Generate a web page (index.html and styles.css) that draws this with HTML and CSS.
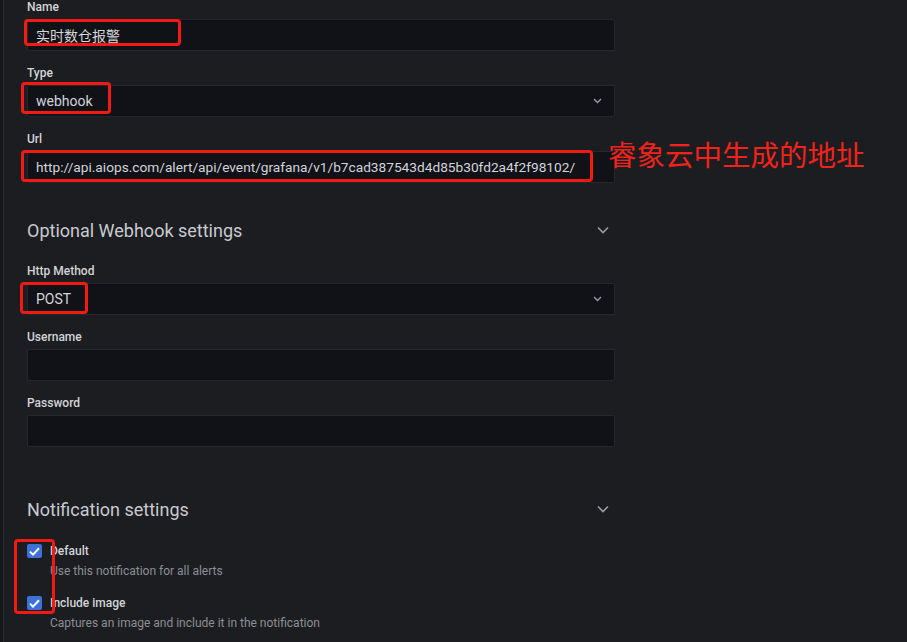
FILE: index.html
```html
<!DOCTYPE html>
<html lang="zh-CN">
<head>
    <meta charset="UTF-8">
    <meta name="viewport" content="width=device-width, initial-scale=1.0">
    <title>Notification channel</title>
    <link rel="stylesheet" href="styles.css">
</head>
<body>
    <div class="shell">
        <div class="rail"></div>
        <div class="main">
            <form class="form">
                <div class="field">
                    <label class="label">Name</label>
                    <input class="input" type="text" value="实时数仓报警">
                </div>
                <div class="field">
                    <label class="label">Type</label>
                    <div class="select">
                        <span>webhook</span>
                        <svg class="caret" width="9" height="6" viewBox="0 0 9 6"><path d="M1 1l3.5 3.5L8 1" fill="none" stroke="#9a9ca3" stroke-width="1.4"/></svg>
                    </div>
                </div>
                <div class="field">
                    <label class="label">Url</label>
                    <input class="input input-url" type="text" value="http://api.aiops.com/alert/api/event/grafana/v1/b7cad387543d4d85b30fd2a4f2f98102/">
                </div>

                <div class="section-head section-head--first">
                    <span>Optional Webhook settings</span>
                    <svg width="12" height="8" viewBox="0 0 12 8"><path d="M1 1.5l5 5 5-5" fill="none" stroke="#9a9ca3" stroke-width="1.6"/></svg>
                </div>
                <div class="field">
                    <label class="label">Http Method</label>
                    <div class="select">
                        <span>POST</span>
                        <svg class="caret" width="9" height="6" viewBox="0 0 9 6"><path d="M1 1l3.5 3.5L8 1" fill="none" stroke="#9a9ca3" stroke-width="1.4"/></svg>
                    </div>
                </div>
                <div class="field">
                    <label class="label">Username</label>
                    <input class="input" type="text" value="">
                </div>
                <div class="field">
                    <label class="label">Password</label>
                    <input class="input" type="password" value="">
                </div>

                <div class="section-head section-head--second">
                    <span>Notification settings</span>
                    <svg width="12" height="8" viewBox="0 0 12 8"><path d="M1 1.5l5 5 5-5" fill="none" stroke="#9a9ca3" stroke-width="1.6"/></svg>
                </div>
                <div class="check-list">
                    <div class="check">
                        <span class="box"><svg width="11" height="9" viewBox="0 0 11 9"><path d="M1 4.6l3 3L10 1.2" fill="none" stroke="#fff" stroke-width="2"/></svg></span>
                        <div class="check-text">
                            <div class="check-title">Default</div>
                            <div class="check-desc">Use this notification for all alerts</div>
                        </div>
                    </div>
                    <div class="check">
                        <span class="box"><svg width="11" height="9" viewBox="0 0 11 9"><path d="M1 4.6l3 3L10 1.2" fill="none" stroke="#fff" stroke-width="2"/></svg></span>
                        <div class="check-text">
                            <div class="check-title">Include image</div>
                            <div class="check-desc">Captures an image and include it in the notification</div>
                        </div>
                    </div>
                </div>
            </form>

            <!-- 截图上的红色标注 -->
            <div class="mark mark-name"></div>
            <div class="mark mark-type"></div>
            <div class="mark mark-url"></div>
            <div class="mark mark-method"></div>
            <div class="mark mark-check"></div>
            <div class="note">睿象云中生成的地址</div>
        </div>
    </div>
</body>
</html>
```

FILE: styles.css
```css
*{
    margin: 0;
    padding: 0;
    box-sizing: border-box;
}
html, body{
    height: 100%;
}
body{
    background-color: #1b1d21;
    color: #d3d4d8;
    font-family: Roboto, "Noto Sans", "Noto Sans CJK SC", sans-serif;
    overflow: hidden;
}
.shell{
    display: flex;
    height: 100%;
}
.rail{
    width: 3px;
    background-color: #15171a;
}
.main{
    position: relative;
    flex: 1;
    border-left: 1px solid #2a2c31;
    padding-left: 23px;
}
.form{
    width: 588px;
}
.field{
    margin-bottom: 15px;
}
.label{
    display: block;
    font-size: 12px;
    font-weight: 500;
    line-height: 15px;
    margin-bottom: 4px;
    color: #d3d4d8;
}
.input,
.select{
    display: flex;
    align-items: center;
    width: 100%;
    height: 32px;
    padding: 0 8px;
    background-color: #111217;
    border: 1px solid #25272c;
    border-radius: 2px;
    color: #d3d4d8;
    font-family: Roboto, "Noto Sans CJK SC", sans-serif;
    font-size: 14px;
    outline: none;
}
.input-url{
    font-size: 13.7px;
}
.select{
    justify-content: space-between;
}
.caret{
    margin-right: 4px;
}
.section-head{
    display: flex;
    justify-content: space-between;
    align-items: center;
    height: 24px;
    font-size: 18px;
    color: #c9cad0;
}
.section-head svg{
    margin-right: 6px;
}
.section-head--first{
    margin-top: 35px;
    margin-bottom: 22px;
}
.section-head--second{
    margin-top: 50px;
    margin-bottom: 22px;
}
.check-list{
    display: flex;
    flex-direction: column;
    gap: 16px;
}
.check{
    display: flex;
    gap: 8px;
}
.box{
    display: flex;
    align-items: center;
    justify-content: center;
    width: 15px;
    height: 14px;
    margin-top: 1px;
    background-color: #3d71d9;
    border-radius: 2px;
}
.check-title{
    font-size: 12px;
    font-weight: 500;
    line-height: 16px;
    margin-bottom: 4px;
    color: #d3d4d8;
}
.check-desc{
    font-size: 12px;
    line-height: 16px;
    color: #8d8f95;
}
.mark{
    position: absolute;
    border: 3px solid #f21a12;
    border-radius: 4px;
}
.mark-name{
    left: 20px;
    top: 19px;
    width: 157px;
    height: 27px;
}
.mark-type{
    left: 17px;
    top: 82px;
    width: 90px;
    height: 32px;
}
.mark-url{
    left: 17px;
    top: 150px;
    width: 572px;
    height: 32px;
}
.mark-method{
    left: 16px;
    top: 282px;
    width: 68px;
    height: 32px;
}
.mark-check{
    left: 10px;
    top: 539px;
    width: 41px;
    height: 75px;
}
.note{
    position: absolute;
    left: 604px;
    top: 135px;
    font-family: "Noto Sans CJK SC", sans-serif;
    font-size: 28.5px;
    line-height: 38px;
    color: #f5221b;
    white-space: nowrap;
}
```
